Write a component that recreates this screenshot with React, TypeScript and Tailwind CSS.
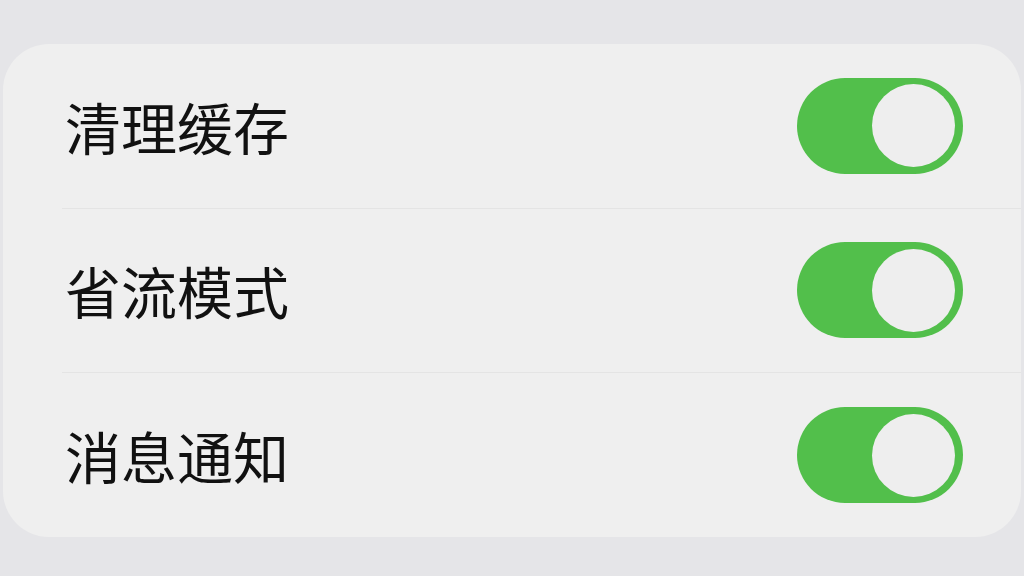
import React from "react";

const items = ["清理缓存", "省流模式", "消息通知"];

function Toggle() {
  return (
    <div className="flex h-[96px] w-[166px] items-center justify-end rounded-full bg-[#52bf4b] pr-[8px]">
      <div className="h-[83px] w-[83px] rounded-full bg-[#eeeeee]" />
    </div>
  );
}

export default function App() {
  return (
    <div
      className="h-[576px] w-[1024px] overflow-hidden bg-[#e5e5e8] px-[3px] pt-[44px]"
      style={{ fontFamily: '"Noto Sans CJK SC", "Noto Sans", sans-serif' }}
    >
      <div className="h-[493px] rounded-[46px] bg-[#efefef] pl-[59px]">
        {items.map((label, i) => (
          <div
            key={label}
            className={
              i < items.length - 1
                ? "flex h-[164.5px] items-center justify-between border-b border-[#e4e4e4] pr-[58px]"
                : "flex h-[164px] items-center justify-between pr-[58px]"
            }
          >
            <span className="pl-[3px] text-[56px] leading-none text-[#111111]">{label}</span>
            <Toggle />
          </div>
        ))}
      </div>
    </div>
  );
}
